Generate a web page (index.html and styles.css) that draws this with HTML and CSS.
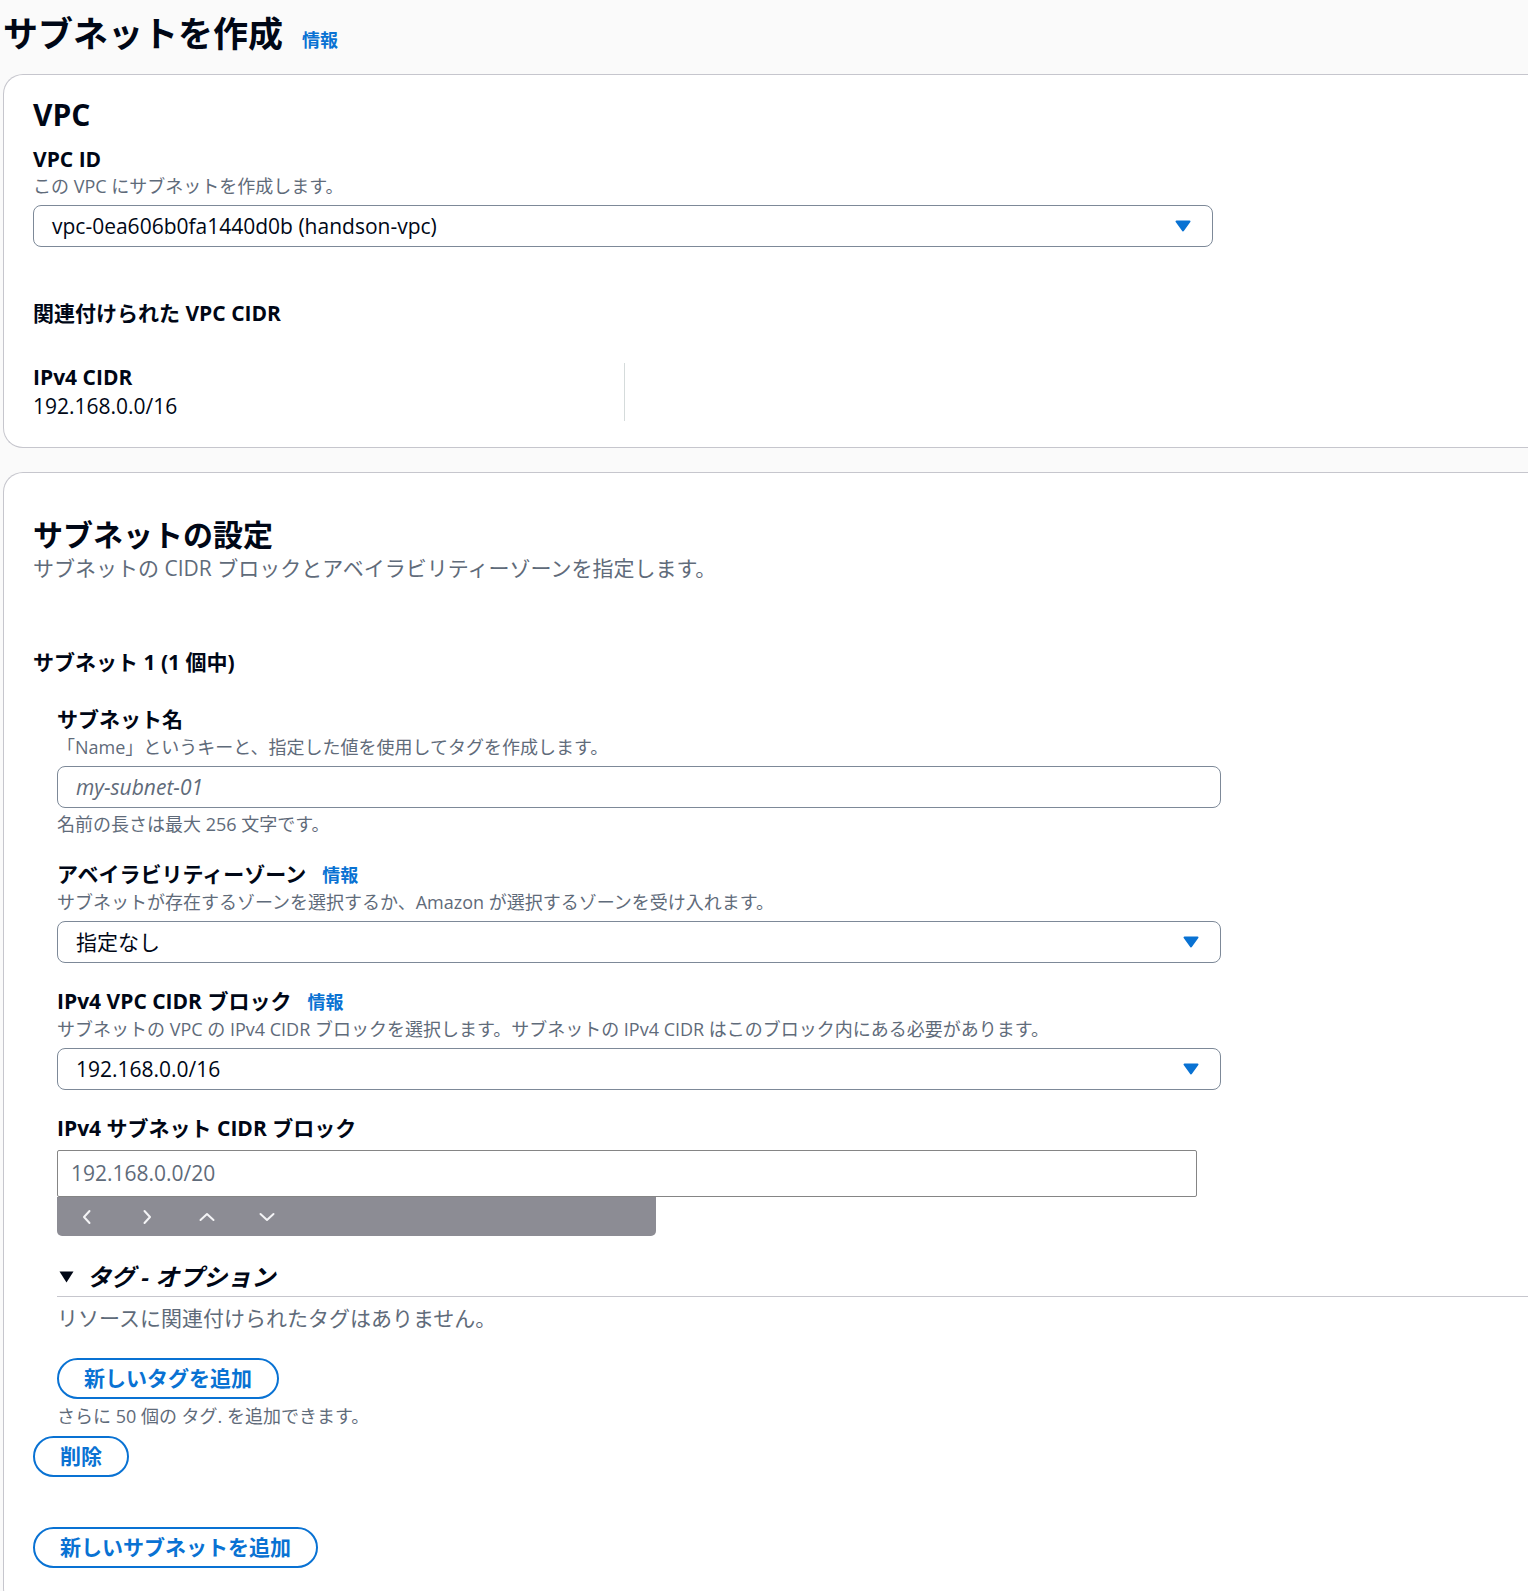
FILE: index.html
```html
<!DOCTYPE html>
<html lang="ja">
<head>
    <meta charset="UTF-8">
    <meta name="viewport" content="width=device-width, initial-scale=1.0">
    <title>サブネットを作成</title>
    <link rel="stylesheet" href="styles.css">
</head>
<body>

<div class="page">
    <h1 class="page-title">サブネットを作成<a class="info" href="#">情報</a></h1>

    <section class="card card-vpc">
        <h2>VPC</h2>
        <div class="field">
            <div class="label">VPC ID</div>
            <div class="desc">この VPC にサブネットを作成します。</div>
            <div class="select select-vpc">
                <span>vpc-0ea606b0fa1440d0b (handson-vpc)</span>
                <svg class="caret" width="16" height="12" viewBox="0 0 16 12"><path d="M1.5 1.5 H14.5 L8 10.5 Z"/></svg>
            </div>
        </div>

        <h3>関連付けられた VPC CIDR</h3>
        <div class="cidr-cols">
            <div class="cidr-col">
                <div class="label">IPv4 CIDR</div>
                <div class="value">192.168.0.0/16</div>
            </div>
        </div>
    </section>

    <section class="card card-subnet">
        <h2>サブネットの設定</h2>
        <div class="header-desc">サブネットの CIDR ブロックとアベイラビリティーゾーンを指定します。</div>

        <div class="subnet-title">サブネット 1 (1 個中)</div>

        <div class="subnet-body">
            <div class="field field-first">
                <div class="label">サブネット名</div>
                <div class="desc">「Name」というキーと、指定した値を使用してタグを作成します。</div>
                <div class="text-input"><span class="placeholder">my-subnet-01</span></div>
                <div class="constraint">名前の長さは最大 256 文字です。</div>
            </div>

            <div class="field">
                <div class="label">アベイラビリティーゾーン<a class="info" href="#">情報</a></div>
                <div class="desc">サブネットが存在するゾーンを選択するか、Amazon が選択するゾーンを受け入れます。</div>
                <div class="select">
                    <span>指定なし</span>
                    <svg class="caret" width="16" height="12" viewBox="0 0 16 12"><path d="M1.5 1.5 H14.5 L8 10.5 Z"/></svg>
                </div>
            </div>

            <div class="field">
                <div class="label">IPv4 VPC CIDR ブロック<a class="info" href="#">情報</a></div>
                <div class="desc">サブネットの VPC の IPv4 CIDR ブロックを選択します。サブネットの IPv4 CIDR はこのブロック内にある必要があります。</div>
                <div class="select">
                    <span>192.168.0.0/16</span>
                    <svg class="caret" width="16" height="12" viewBox="0 0 16 12"><path d="M1.5 1.5 H14.5 L8 10.5 Z"/></svg>
                </div>
            </div>

            <div class="field">
                <div class="label">IPv4 サブネット CIDR ブロック</div>
                <div class="cidr-input">192.168.0.0/20</div>
                <div class="nav-bar">
                    <svg width="16" height="16" viewBox="0 0 16 16"><path d="M10.5 2 L5 8 L10.5 14"/></svg>
                    <svg width="16" height="16" viewBox="0 0 16 16"><path d="M5.5 2 L11 8 L5.5 14"/></svg>
                    <svg width="16" height="16" viewBox="0 0 16 16"><path d="M1.5 11 L8 5 L14.5 11"/></svg>
                    <svg width="16" height="16" viewBox="0 0 16 16"><path d="M1.5 5 L8 11 L14.5 5"/></svg>
                </div>
            </div>

            <details class="tags" open>
                <summary>
                    <svg class="toggle" width="15" height="12" viewBox="0 0 15 12"><path d="M0.5 0.5 H14.5 L7.5 11.5 Z"/></svg>
                    <span>タグ - オプション</span>
                </summary>
                <div class="tags-empty">リソースに関連付けられたタグはありません。</div>
                <div class="btn-row btn-row-tag"><button class="btn">新しいタグを追加</button></div>
                <div class="tags-hint">さらに 50 個の タグ. を追加できます。</div>
            </details>
        </div>

        <div class="btn-row btn-row-delete"><button class="btn">削除</button></div>
        <div class="btn-row btn-row-subnet"><button class="btn">新しいサブネットを追加</button></div>
    </section>
</div>

</body>
</html>
```

FILE: styles.css
```css
* {
    box-sizing: border-box;
}
body {
    margin: 0;
    background-color: #fafafa;
    color: #000716;
    font-family: "Open Sans", "Noto Sans CJK JP", sans-serif;
    font-size: 21px;
    line-height: 28px;
}
.page {
    padding: 12px 0 0 3px;
}
.page-title {
    margin: 0 0 18px;
    height: 44px;
    font-size: 35px;
    line-height: 44px;
    font-weight: 700;
}
.page-title .info {
    margin-left: 19px;
}
.info {
    margin-left: 16px;
    font-size: 18px;
    line-height: 1;
    font-weight: 700;
    color: #0972d3;
    text-decoration: none;
}
.card {
    background-color: #ffffff;
    border: 1px solid #c6c6cd;
    border-right: none;
    border-radius: 20px 0 0 20px;
}
.card h2 {
    margin: 0;
    font-size: 30px;
    line-height: 36px;
    font-weight: 700;
}
.label {
    font-weight: 700;
    line-height: 28px;
}
.desc {
    margin-top: 1px;
    font-size: 18px;
    line-height: 26px;
    color: #5f6b7a;
}
.select {
    display: flex;
    align-items: center;
    justify-content: space-between;
    width: 1164px;
    height: 42px;
    margin-top: 6px;
    padding: 0 21px 0 18px;
    border: 1px solid #7d8998;
    border-radius: 8px;
    background-color: #ffffff;
}
.caret path {
    fill: #0972d3;
    stroke: #0972d3;
    stroke-width: 2;
    stroke-linejoin: round;
}

/* VPC card */
.card-vpc {
    padding: 22px 0 26px 29px;
}
.card-vpc .field {
    margin-top: 13px;
}
.card-vpc .label {
    line-height: 26px;
}
.select-vpc {
    width: 1180px;
}
.card-vpc h3 {
    margin: 51px 0 0;
    font-size: 21px;
    line-height: 30px;
    font-weight: 700;
}
.cidr-cols {
    display: flex;
    margin-top: 35px;
}
.cidr-col {
    width: 592px;
    border-right: 1px solid #d5dbdb;
}
.cidr-col .label,
.cidr-col .value {
    line-height: 29px;
}

/* subnet card */
.card-subnet {
    margin-top: 24px;
    padding: 44px 0 40px 29px;
}
.header-desc {
    font-size: 21px;
    line-height: 30px;
    color: #5f6b7a;
}
.subnet-title {
    margin-top: 65px;
    font-weight: 700;
}
.subnet-body {
    padding-left: 24px;
}
.subnet-body .field {
    margin-top: 24px;
}
.subnet-body .field-first {
    margin-top: 29px;
}
.text-input {
    display: flex;
    align-items: center;
    width: 1164px;
    height: 42px;
    margin-top: 6px;
    padding: 0 18px;
    border: 1px solid #7d8998;
    border-radius: 8px;
}
.placeholder {
    font-style: italic;
    color: #5f6b7a;
}
.constraint {
    margin-top: 4px;
    font-size: 18px;
    line-height: 24px;
    color: #5f6b7a;
}
.cidr-input {
    width: 1140px;
    height: 47px;
    margin-top: 8px;
    padding: 0 13px;
    border: 1px solid #858585;
    border-radius: 2px;
    line-height: 45px;
    color: #5f6b7a;
}
.nav-bar {
    display: flex;
    align-items: center;
    gap: 44px;
    width: 599px;
    height: 39px;
    padding-left: 22px;
    background-color: #8c8c94;
    border-radius: 0 0 5px 5px;
}
.nav-bar path {
    fill: none;
    stroke: #f4f4f6;
    stroke-width: 2;
    stroke-linecap: round;
    stroke-linejoin: round;
}
.tags {
    margin-top: 26px;
}
.tags summary {
    display: flex;
    align-items: center;
    list-style: none;
    padding-bottom: 4px;
    border-bottom: 1px solid #c6c6cd;
    font-size: 24px;
    line-height: 30px;
    font-weight: 700;
    font-style: italic;
    cursor: pointer;
}
.tags summary::-webkit-details-marker {
    display: none;
}
.toggle {
    margin: 0 13px 0 2px;
}
.toggle path {
    fill: #000716;
}
.tags-empty {
    margin-top: 6px;
    line-height: 30px;
    color: #5f6b7a;
}
.tags-hint {
    margin-top: 5px;
    font-size: 18px;
    line-height: 24px;
    color: #5f6b7a;
}
.btn {
    height: 41px;
    padding: 0 25px;
    border: 2px solid #0972d3;
    border-radius: 21px;
    background-color: #ffffff;
    color: #0972d3;
    font-family: "Open Sans", "Noto Sans CJK JP", sans-serif;
    font-size: 21px;
    font-weight: 700;
    line-height: 37px;
    cursor: pointer;
}
.btn-row {
    display: flex;
}
.btn-row-tag {
    margin-top: 25px;
}
.btn-row-delete {
    margin-top: 8px;
}
.btn-row-subnet {
    margin-top: 50px;
}
```
